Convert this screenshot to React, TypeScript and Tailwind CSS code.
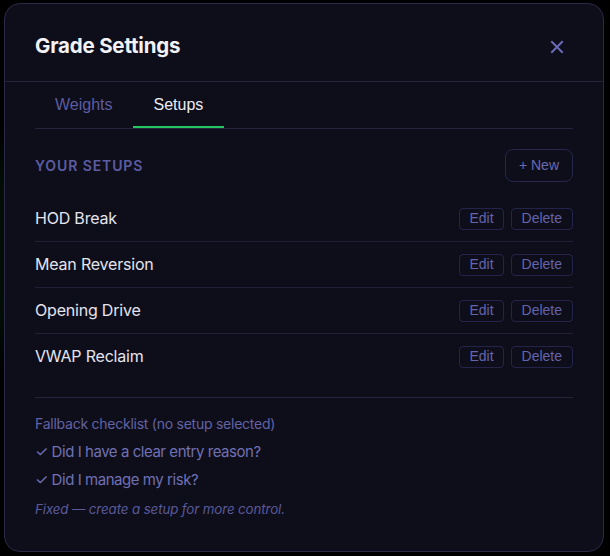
import React from "react";

const rows = ["HOD Break", "Mean Reversion", "Opening Drive", "VWAP Reclaim"];

export default function App() {
  return (
    <div className="w-[610px] h-[556px] bg-black relative overflow-hidden" style={{ fontFamily: "Inter, 'Noto Sans', sans-serif" }}>
      <div className="absolute left-[-30px] top-[150px] w-[40px] h-[200px] rounded-full bg-[#0a2a14] blur-xl opacity-60" />
      <div className="relative ml-[4px] mt-[3px] w-[600px] h-[549px] rounded-[16px] border border-[#2a2a48] bg-[#0e0e1a] flex flex-col">
        <div className="h-[78px] pt-[8px] px-[30px] flex items-center justify-between border-b border-[#24243c]">
          <div className="text-[20.5px] font-bold text-[#f2f2f8] tracking-[-0.2px]">Grade Settings</div>
          <svg width="14" height="14" viewBox="0 0 14 14" className="mr-[9px]">
            <path d="M2 2 L12 12 M12 2 L2 12" stroke="#6a6ab8" strokeWidth="2" strokeLinecap="square" />
          </svg>
        </div>
        <div className="px-[30px] flex flex-col">
          <div className="flex border-b border-[#24243c]" style={{ fontFamily: "'Liberation Sans', Arial, sans-serif" }}>
            <div className="px-[20px] pt-[11px] pb-[9px] text-[16px] leading-[24px] text-[#5c5ca0] border-b-2 border-transparent">Weights</div>
            <div className="px-[21px] pt-[11px] pb-[9px] text-[16px] leading-[24px] text-[#ececf4] border-b-2 border-[#22c55e]">Setups</div>
          </div>
          <div className="mt-[20px] flex items-center justify-between">
            <div className="text-[14px] font-semibold tracking-[0.9px] text-[#5c5ca2]">YOUR SETUPS</div>
            <div className="h-[33px] px-[13px] flex items-center rounded-[8px] border border-[#26264a] text-[14px] text-[#6a6ab0]" style={{ fontFamily: "'Liberation Sans', Arial, sans-serif" }}>+ New</div>
          </div>
          <div className="mt-[14px] flex flex-col">
            {rows.map((r, i) => (
              <div key={r} className={`flex items-center justify-between py-[11px] ${i < rows.length - 1 ? "border-b border-[#1f1f36]" : ""}`}>
                <div className="text-[16px] leading-[23px] text-[#e4e4ee] tracking-[-0.2px]">{r}</div>
                <div className="flex gap-[7px]" style={{ fontFamily: "'Liberation Sans', Arial, sans-serif" }}>
                  <div className="h-[22px] px-[9px] flex items-center rounded-[4px] border border-[#24244a] text-[14px] text-[#6464ac]">Edit</div>
                  <div className="h-[22px] px-[10px] flex items-center rounded-[4px] border border-[#24244a] text-[14px] text-[#6464ac]">Delete</div>
                </div>
              </div>
            ))}
          </div>
          <div className="mt-[18px] border-t border-[#24243c] pt-[16px] flex flex-col">
            <div className="text-[14px] leading-[20px] text-[#6262a4] tracking-[-0.25px]">Fallback checklist (no setup selected)</div>
            <div className="mt-[7px] text-[15px] leading-[22px] text-[#7070b4] tracking-[-0.45px]">✓ Did I have a clear entry reason?</div>
            <div className="mt-[6px] text-[15px] leading-[22px] text-[#7070b4] tracking-[-0.45px]">✓ Did I manage my risk?</div>
            <div className="mt-[8px] text-[13.3px] leading-[20px] italic text-[#5a5a9a] tracking-[-0.1px]">Fixed — create a setup for more control.</div>
          </div>
        </div>
      </div>
    </div>
  );
}
